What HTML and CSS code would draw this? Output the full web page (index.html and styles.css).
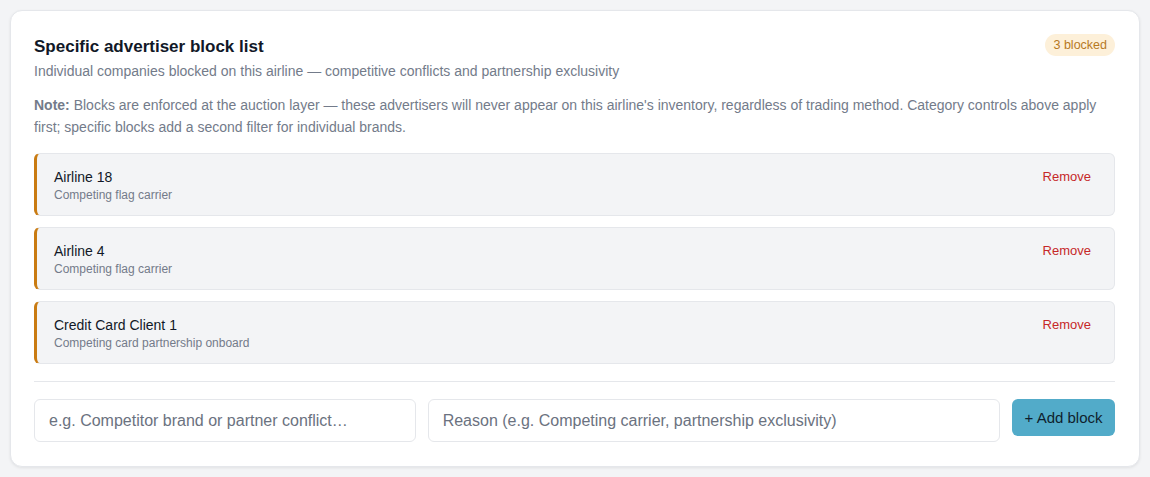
FILE: index.html
```html
<!DOCTYPE html>
<html>
<head>
<meta charset="utf-8">
<link rel="stylesheet" href="styles.css">
</head>
<body>
<section class="card">
  <header class="head">
    <div>
      <h2 class="title">Specific advertiser block list</h2>
      <p class="subtitle">Individual companies blocked on this airline — competitive conflicts and partnership exclusivity</p>
    </div>
    <span class="badge">3 blocked</span>
  </header>
  <p class="note"><strong>Note:</strong> Blocks are enforced at the auction layer — these advertisers will never appear on this airline's inventory, regardless of trading method. Category controls above apply first; specific blocks add a second filter for individual brands.</p>
  <ul class="list">
    <li class="row">
      <div class="info"><div class="name">Airline 18</div><div class="reason">Competing flag carrier</div></div>
      <button class="remove">Remove</button>
    </li>
    <li class="row">
      <div class="info"><div class="name">Airline 4</div><div class="reason">Competing flag carrier</div></div>
      <button class="remove">Remove</button>
    </li>
    <li class="row">
      <div class="info"><div class="name">Credit Card Client 1</div><div class="reason">Competing card partnership onboard</div></div>
      <button class="remove">Remove</button>
    </li>
  </ul>
  <div class="form">
    <input class="field field-name" type="text" placeholder="e.g. Competitor brand or partner conflict…">
    <input class="field field-reason" type="text" placeholder="Reason (e.g. Competing carrier, partnership exclusivity)">
    <button class="add">+ Add block</button>
  </div>
</section>
</body>
</html>
```
FILE: styles.css
```css
* { box-sizing: border-box; }
html, body { margin: 0; padding: 0; }
body {
  background: #f3f4f6;
  padding: 10px;
  font-family: "Liberation Sans", Arial, sans-serif;
  color: #111827;
}
.card {
  width: 1130px;
  background: #ffffff;
  border: 1px solid #e5e7eb;
  border-radius: 12px;
  box-shadow: 0 1px 3px rgba(0,0,0,0.08);
  padding: 23px 24px 24px 23px;
}
.head {
  display: flex;
  justify-content: space-between;
  align-items: flex-start;
}
.title {
  margin: 2px 0 0;
  font-size: 17px;
  font-weight: 700;
  line-height: 22px;
  color: #111827;
}
.subtitle {
  margin: 3px 0 0;
  font-size: 14px;
  line-height: 20px;
  color: #737b8a;
}
.badge {
  margin-top: 0px;
  background: #fdf0d9;
  color: #b7791f;
  font-size: 12.5px;
  line-height: 22px;
  padding: 0 8px;
  border-radius: 11px;
}
.note {
  margin: 13px 0 0;
  font-size: 14px;
  line-height: 22px;
  color: #737b8a;
}
.note strong { font-weight: 700; }
.list {
  list-style: none;
  margin: 15px 0 0;
  padding: 0;
  display: flex;
  flex-direction: column;
  gap: 11px;
}
.row {
  display: flex;
  justify-content: space-between;
  align-items: flex-start;
  height: 63px;
  background: #f3f4f6;
  border: 1px solid #e5e7eb;
  border-left: 3px solid #c97b12;
  border-radius: 6px;
  padding: 14px 16px 0 17px;
}
.name {
  font-size: 14px;
  line-height: 19px;
  color: #111827;
}
.reason {
  margin-top: 0px;
  font-size: 12px;
  line-height: 17px;
  color: #737b8a;
}
.remove {
  border: none;
  background: none;
  font-family: inherit;
  font-size: 13px;
  color: #c62828;
  padding: 1px 7px;
  cursor: pointer;
}
.form {
  margin-top: 17px;
  border-top: 1px solid #e5e7eb;
  padding-top: 17px;
  display: flex;
  align-items: flex-start;
  gap: 12px;
}
.field {
  height: 43px;
  border: 1px solid #e5e7eb;
  border-radius: 6px;
  padding: 0 14px;
  font-family: inherit;
  font-size: 16px;
  color: #111827;
  background: #fff;
}
.field::placeholder { color: #6b7280; }
.field-name { width: 382px; }
.field-reason { width: 573px; }
.add {
  width: 103px;
  height: 37px;
  border: none;
  border-radius: 6px;
  background: #52abc9;
  color: #0f1f2e;
  font-family: inherit;
  font-size: 15px;
  padding: 0;
}
```
